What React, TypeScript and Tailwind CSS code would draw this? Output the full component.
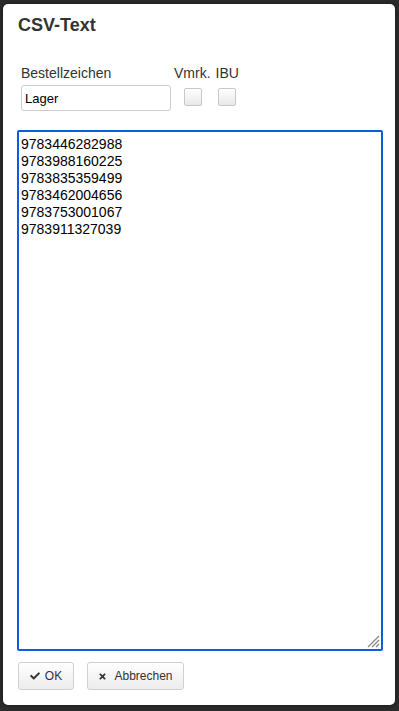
import { FaCheck, FaTimes } from "react-icons/fa";

const isbns = [
  "9783446282988",
  "9783988160225",
  "9783835359499",
  "9783462004656",
  "9783753001067",
  "9783911327039",
];

function Box() {
  return (
    <div className="h-[18px] w-[18px] rounded-[2px] border border-[#c8c8c8] bg-gradient-to-b from-white to-[#e8e8e8]" />
  );
}

export default function App() {
  return (
    <div className="h-[711px] w-[399px] overflow-hidden bg-[#2b2b2b] pl-[3px] pt-[4px] font-['Liberation_Sans',Arial,sans-serif]">
      <div className="flex h-[701px] w-[392px] flex-col rounded-[5px] bg-white pl-[15px] pt-[10px] shadow-[0_0_4px_rgba(0,0,0,0.5)]">
        <h1 className="text-[18px] font-bold leading-[22px] text-[#333]">CSV-Text</h1>

        {/* Form row */}
        <div className="ml-[3px] mt-[29px] flex text-[14px] leading-[17px] text-[#333]">
          <div className="flex w-[150px] flex-col">
            <span>Bestellzeichen</span>
            <div className="mt-[3px] flex h-[26px] items-center rounded-[3px] border border-[#ccc] px-[3px] text-[13px] text-black">
              Lager
            </div>
          </div>
          <div className="ml-[3px] flex flex-col items-center">
            <span>Vmrk.</span>
            <div className="mt-[6px] pl-[1px]">
              <Box />
            </div>
          </div>
          <div className="ml-[5px] flex flex-col items-center">
            <span>IBU</span>
            <div className="mt-[6px]">
              <Box />
            </div>
          </div>
        </div>

        {/* Textarea */}
        <div className="relative ml-[-1px] mt-[19px] h-[521px] w-[366px] rounded-[2px] border-2 border-[#0a5fdc] px-[2px] pt-[4px] text-[14px] leading-[17px] text-black">
          {isbns.map((n) => (
            <div key={n}>{n}</div>
          ))}
          <svg className="absolute bottom-[1px] right-[1px]" width="13" height="13" viewBox="0 0 13 13">
            <g stroke="#888" strokeWidth="1.3">
              <line x1="12" y1="1" x2="1" y2="12" />
              <line x1="12" y1="5" x2="5" y2="12" />
              <line x1="12" y1="9" x2="9" y2="12" />
            </g>
          </svg>
        </div>

        {/* Buttons */}
        <div className="mt-[11px] flex gap-[13px] text-[12px] text-[#333]">
          <button className="flex h-[28px] w-[56px] items-center justify-center gap-[5px] rounded-[3px] border border-[#d0d0d0] bg-gradient-to-b from-white to-[#ececec]">
            <FaCheck size={10} />
            <span>OK</span>
          </button>
          <button className="flex h-[28px] w-[97px] items-center justify-center gap-[7px] rounded-[3px] border border-[#d0d0d0] bg-gradient-to-b from-white to-[#ececec]">
            <FaTimes size={9} />
            <span>Abbrechen</span>
          </button>
        </div>
      </div>
    </div>
  );
}
